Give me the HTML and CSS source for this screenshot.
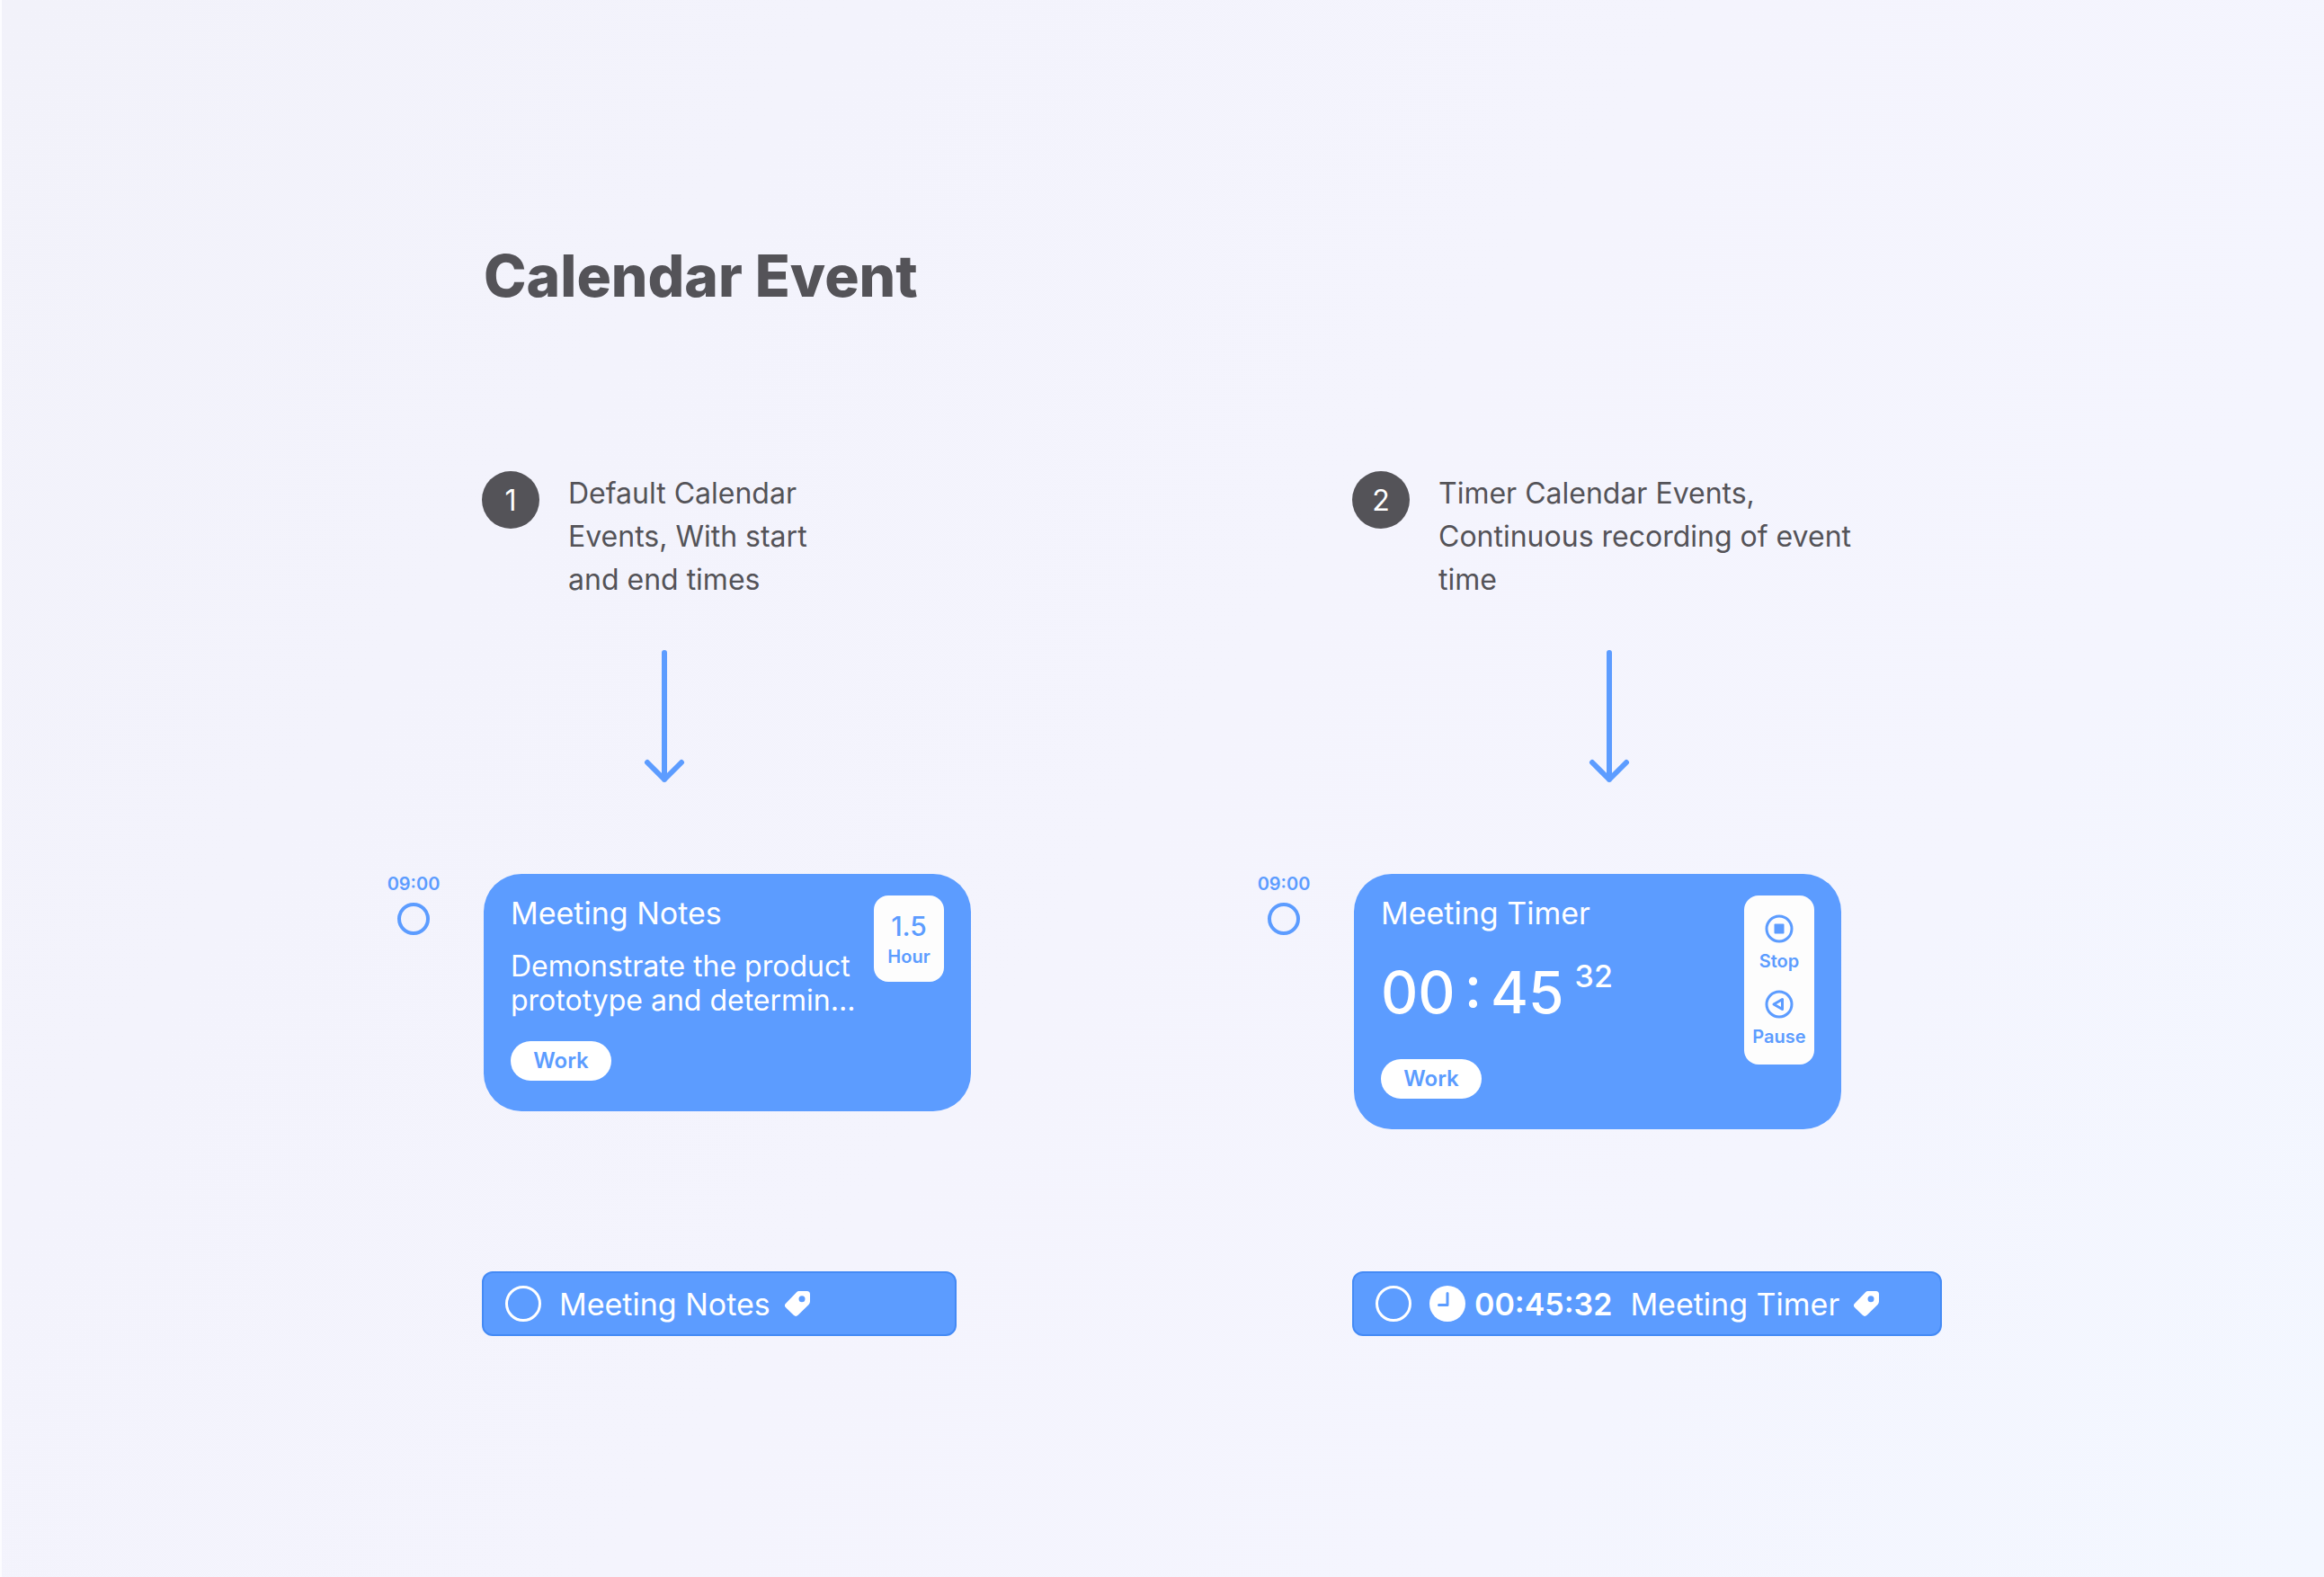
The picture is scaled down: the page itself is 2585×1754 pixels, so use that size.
FILE: index.html
```html
<!DOCTYPE html>
<html lang="en">
<head>
<meta charset="utf-8">
<meta name="viewport" content="width=device-width, initial-scale=1">
<title>Calendar Event</title>
<link rel="stylesheet" href="styles.css">
</head>
<body>
<svg class="sprite" aria-hidden="true">
  <symbol id="arrow" viewBox="0 0 46 148">
    <path d="M23 3V144M4 125L23 144L42 125" fill="none" stroke="currentColor" stroke-width="6" stroke-linecap="round" stroke-linejoin="round"/>
  </symbol>
  <symbol id="tag" viewBox="0 0 28 28">
    <path fill="currentColor" fill-rule="evenodd" d="M15.500 0H24.500Q28 0 28 3.500V11.500Q28 13.500 26.600 14.900L14.600 26.800Q12.200 29 9.800 26.800L1 18.300Q-1.200 16 1 13.700L13.300 1Q14.300 0 15.500 0ZM19 5.200A3.500 3.500 0 1 0 19 12.200A3.500 3.500 0 1 0 19 5.200Z"/>
  </symbol>
  <symbol id="clock" viewBox="0 0 40 40">
    <circle cx="20" cy="20" r="20" fill="currentColor"/>
    <path d="M20 8.500V21.500H10.500" fill="none" stroke="#5c9cff" stroke-width="3" stroke-linecap="round" stroke-linejoin="round"/>
  </symbol>
  <symbol id="stop" viewBox="0 0 32 32">
    <circle cx="16" cy="16" r="14" fill="none" stroke="currentColor" stroke-width="3"/>
    <rect x="10.500" y="10.500" width="11" height="11" rx="1" fill="currentColor"/>
  </symbol>
  <symbol id="pause" viewBox="0 0 32 32">
    <circle cx="16" cy="16" r="14" fill="none" stroke="currentColor" stroke-width="3"/>
    <path d="M19.500 10.500V21.500L10 16Z" fill="none" stroke="currentColor" stroke-width="3" stroke-linejoin="round"/>
  </symbol>
</svg>

<main class="page">
  <h1 class="title">Calendar Event</h1>

  <div class="columns">
    <section class="column">
      <div class="lead lead-default">
        <div class="note">
          <span class="number">1</span>
          <p class="note-text">Default Calendar Events, With start and end times</p>
        </div>
        <svg class="arrow" aria-hidden="true"><use href="#arrow"/></svg>
      </div>

      <div class="event">
        <label class="slot">
          <span class="slot-time">09:00</span>
          <input class="slot-ring" type="checkbox">
        </label>
        <article class="card">
          <div class="card-body">
            <h2 class="card-title">Meeting Notes</h2>
            <p class="card-text">Demonstrate the product prototype and determin...</p>
            <span class="pill">Work</span>
          </div>
          <div class="side">
            <span class="hours">1.5</span>
            <span class="side-label">Hour</span>
          </div>
        </article>
      </div>

      <div class="bar">
        <input class="bar-ring" type="checkbox" id="notes-done">
        <label class="bar-name" for="notes-done">Meeting Notes</label>
        <svg class="tag" aria-hidden="true"><use href="#tag"/></svg>
      </div>
    </section>

    <section class="column">
      <div class="lead lead-timer">
        <div class="note">
          <span class="number">2</span>
          <p class="note-text">Timer Calendar Events, Continuous recording of event time</p>
        </div>
        <svg class="arrow" aria-hidden="true"><use href="#arrow"/></svg>
      </div>

      <div class="event">
        <label class="slot">
          <span class="slot-time">09:00</span>
          <input class="slot-ring" type="checkbox">
        </label>
        <article class="card">
          <div class="card-body">
            <h2 class="card-title">Meeting Timer</h2>
            <div class="timer">
              <div class="timer-main"><span>00</span><span>:</span><span>45</span></div>
              <span class="timer-seconds">32</span>
            </div>
            <span class="pill">Work</span>
          </div>
          <div class="side side-actions">
            <button class="action" type="button">
              <svg class="action-icon" aria-hidden="true"><use href="#stop"/></svg>
              <span class="side-label">Stop</span>
            </button>
            <button class="action" type="button">
              <svg class="action-icon" aria-hidden="true"><use href="#pause"/></svg>
              <span class="side-label">Pause</span>
            </button>
          </div>
        </article>
      </div>

      <div class="bar bar-timer">
        <input class="bar-ring" type="checkbox" id="timer-done">
        <svg class="clock" aria-hidden="true"><use href="#clock"/></svg>
        <span class="bar-time">00:45:32</span>
        <label class="bar-name" for="timer-done">Meeting Timer</label>
        <svg class="tag" aria-hidden="true"><use href="#tag"/></svg>
      </div>
    </section>
  </div>
</main>
</body>
</html>
```
FILE: styles.css
```css
:root {
  --blue: #5c9cff;
  --blue-edge: #448af5;
  --ink: #545358;
}

*,
*::before,
*::after {
  box-sizing: border-box;
}

body {
  margin: 0;
  min-height: 100vh;
  border-left: 2px solid #fcfcff;
  background: linear-gradient(125deg, #f2f2fa 0%, #f3f3fc 25%, #f4f4fd 50%, #f4f5fe 75%, #f3f7ff 100%);
  color: var(--ink);
  font-family: Inter, "Liberation Sans", sans-serif;
  font-size: 32px;
}

h1,
h2,
p {
  margin: 0;
}

.sprite {
  display: none;
}

.page {
  padding: 267px 220px 120px 427px;
}

.title {
  padding-left: 109px;
  font-size: 64px;
  font-weight: 800;
  line-height: 80px;
}

.columns {
  display: grid;
  grid-template-columns: 1fr 1fr;
  grid-template-rows: auto auto auto;
  margin-top: 177px;
}

.column {
  display: grid;
  grid-row: span 3;
  grid-template-rows: subgrid;
  align-items: start;
  justify-items: start;
}

/* Numbered note with the arrow centred under it */
.lead {
  display: flex;
  flex-direction: column;
  align-items: center;
  gap: 54px;
  margin-left: 107px;
  padding-bottom: 101px;
}

.lead-default {
  width: 406px;
}

.lead-timer {
  width: 572px;
}

.note {
  display: flex;
  align-items: flex-start;
  gap: 32px;
  width: 100%;
}

.number {
  display: flex;
  flex: none;
  align-items: center;
  justify-content: center;
  width: 64px;
  height: 64px;
  border-radius: 50%;
  background: var(--ink);
  color: #fff;
}

.note-text {
  padding-top: 1px;
  line-height: 48px;
}

.arrow {
  width: 46px;
  height: 148px;
  color: var(--blue);
}

/* Time slot and its event card */
.event {
  display: flex;
  align-items: flex-start;
  gap: 47px;
  padding-bottom: 158px;
}

.slot {
  display: flex;
  flex-direction: column;
  align-items: center;
  gap: 10px;
  width: 62px;
  color: var(--blue);
}

.slot-time {
  font-size: 20px;
  font-weight: 600;
  line-height: 22px;
}

.slot-ring,
.bar-ring {
  flex: none;
  margin: 0;
  border-radius: 50%;
  appearance: none;
}

.slot-ring {
  width: 36px;
  height: 36px;
  border: 4px solid var(--blue);
}

.card {
  display: flex;
  align-items: flex-start;
  justify-content: space-between;
  width: 542px;
  padding: 24px 30px 34px;
  border-radius: 42px;
  background: var(--blue);
  color: #fff;
}

.card-body {
  display: flex;
  flex: 1;
  flex-direction: column;
  align-items: flex-start;
}

.card-title {
  font-size: 34px;
  font-weight: 400;
  line-height: 40px;
}

.card-text {
  margin: 20px 0 26px;
  line-height: 38px;
}

.pill {
  min-width: 112px;
  padding: 0 20px;
  border-radius: 22px;
  background: #fff;
  color: var(--blue);
  font-size: 24px;
  font-weight: 600;
  line-height: 44px;
  text-align: center;
}

.timer {
  display: flex;
  align-items: flex-start;
  gap: 12px;
  margin: 30px 0 36px;
}

/* "case" lifts the colon to the middle of the digits */
.timer-main {
  display: flex;
  gap: 10px;
  font-feature-settings: "case";
  font-size: 64px;
  font-weight: 500;
  line-height: 76px;
}

.timer-seconds {
  font-size: 34px;
  font-weight: 500;
  line-height: 40px;
}

.side {
  display: flex;
  flex: none;
  flex-direction: column;
  align-items: center;
  width: 78px;
  padding: 14px 0;
  border-radius: 16px;
  background: #fdfdfd;
  color: var(--blue);
}

.side-actions {
  gap: 18px;
  padding: 21px 0 17px;
}

.hours {
  font-size: 30px;
  font-weight: 500;
  line-height: 40px;
}

.side-label {
  font-size: 20px;
  font-weight: 600;
  line-height: 28px;
}

.action {
  display: flex;
  flex-direction: column;
  align-items: center;
  gap: 6px;
  padding: 0;
  border: 0;
  background: none;
  color: inherit;
  font: inherit;
  cursor: pointer;
}

.action-icon {
  width: 32px;
  height: 32px;
}

/* One-line event */
.bar {
  display: flex;
  align-items: center;
  width: 528px;
  height: 72px;
  margin-left: 107px;
  padding: 0 24px;
  border: 2px solid var(--blue-edge);
  border-radius: 12px;
  background: var(--blue);
  color: #fff;
  font-size: 34px;
}

.bar-timer {
  width: 656px;
}

.bar-ring {
  width: 40px;
  height: 40px;
  border: 3px solid #fff;
}

.bar-name {
  margin-left: 20px;
}

.bar-time {
  margin-left: 10px;
  font-weight: 600;
}

.clock {
  width: 40px;
  height: 40px;
  margin-left: 20px;
}

.tag {
  width: 28px;
  height: 28px;
  margin-left: 16px;
}

@media (max-width: 1900px) {
  .page {
    padding: 64px 32px;
  }

  .columns {
    grid-template-columns: 1fr;
    grid-template-rows: none;
    row-gap: 64px;
    margin-top: 64px;
  }

  .column {
    grid-row: auto;
    grid-template-rows: none;
  }
}
```
